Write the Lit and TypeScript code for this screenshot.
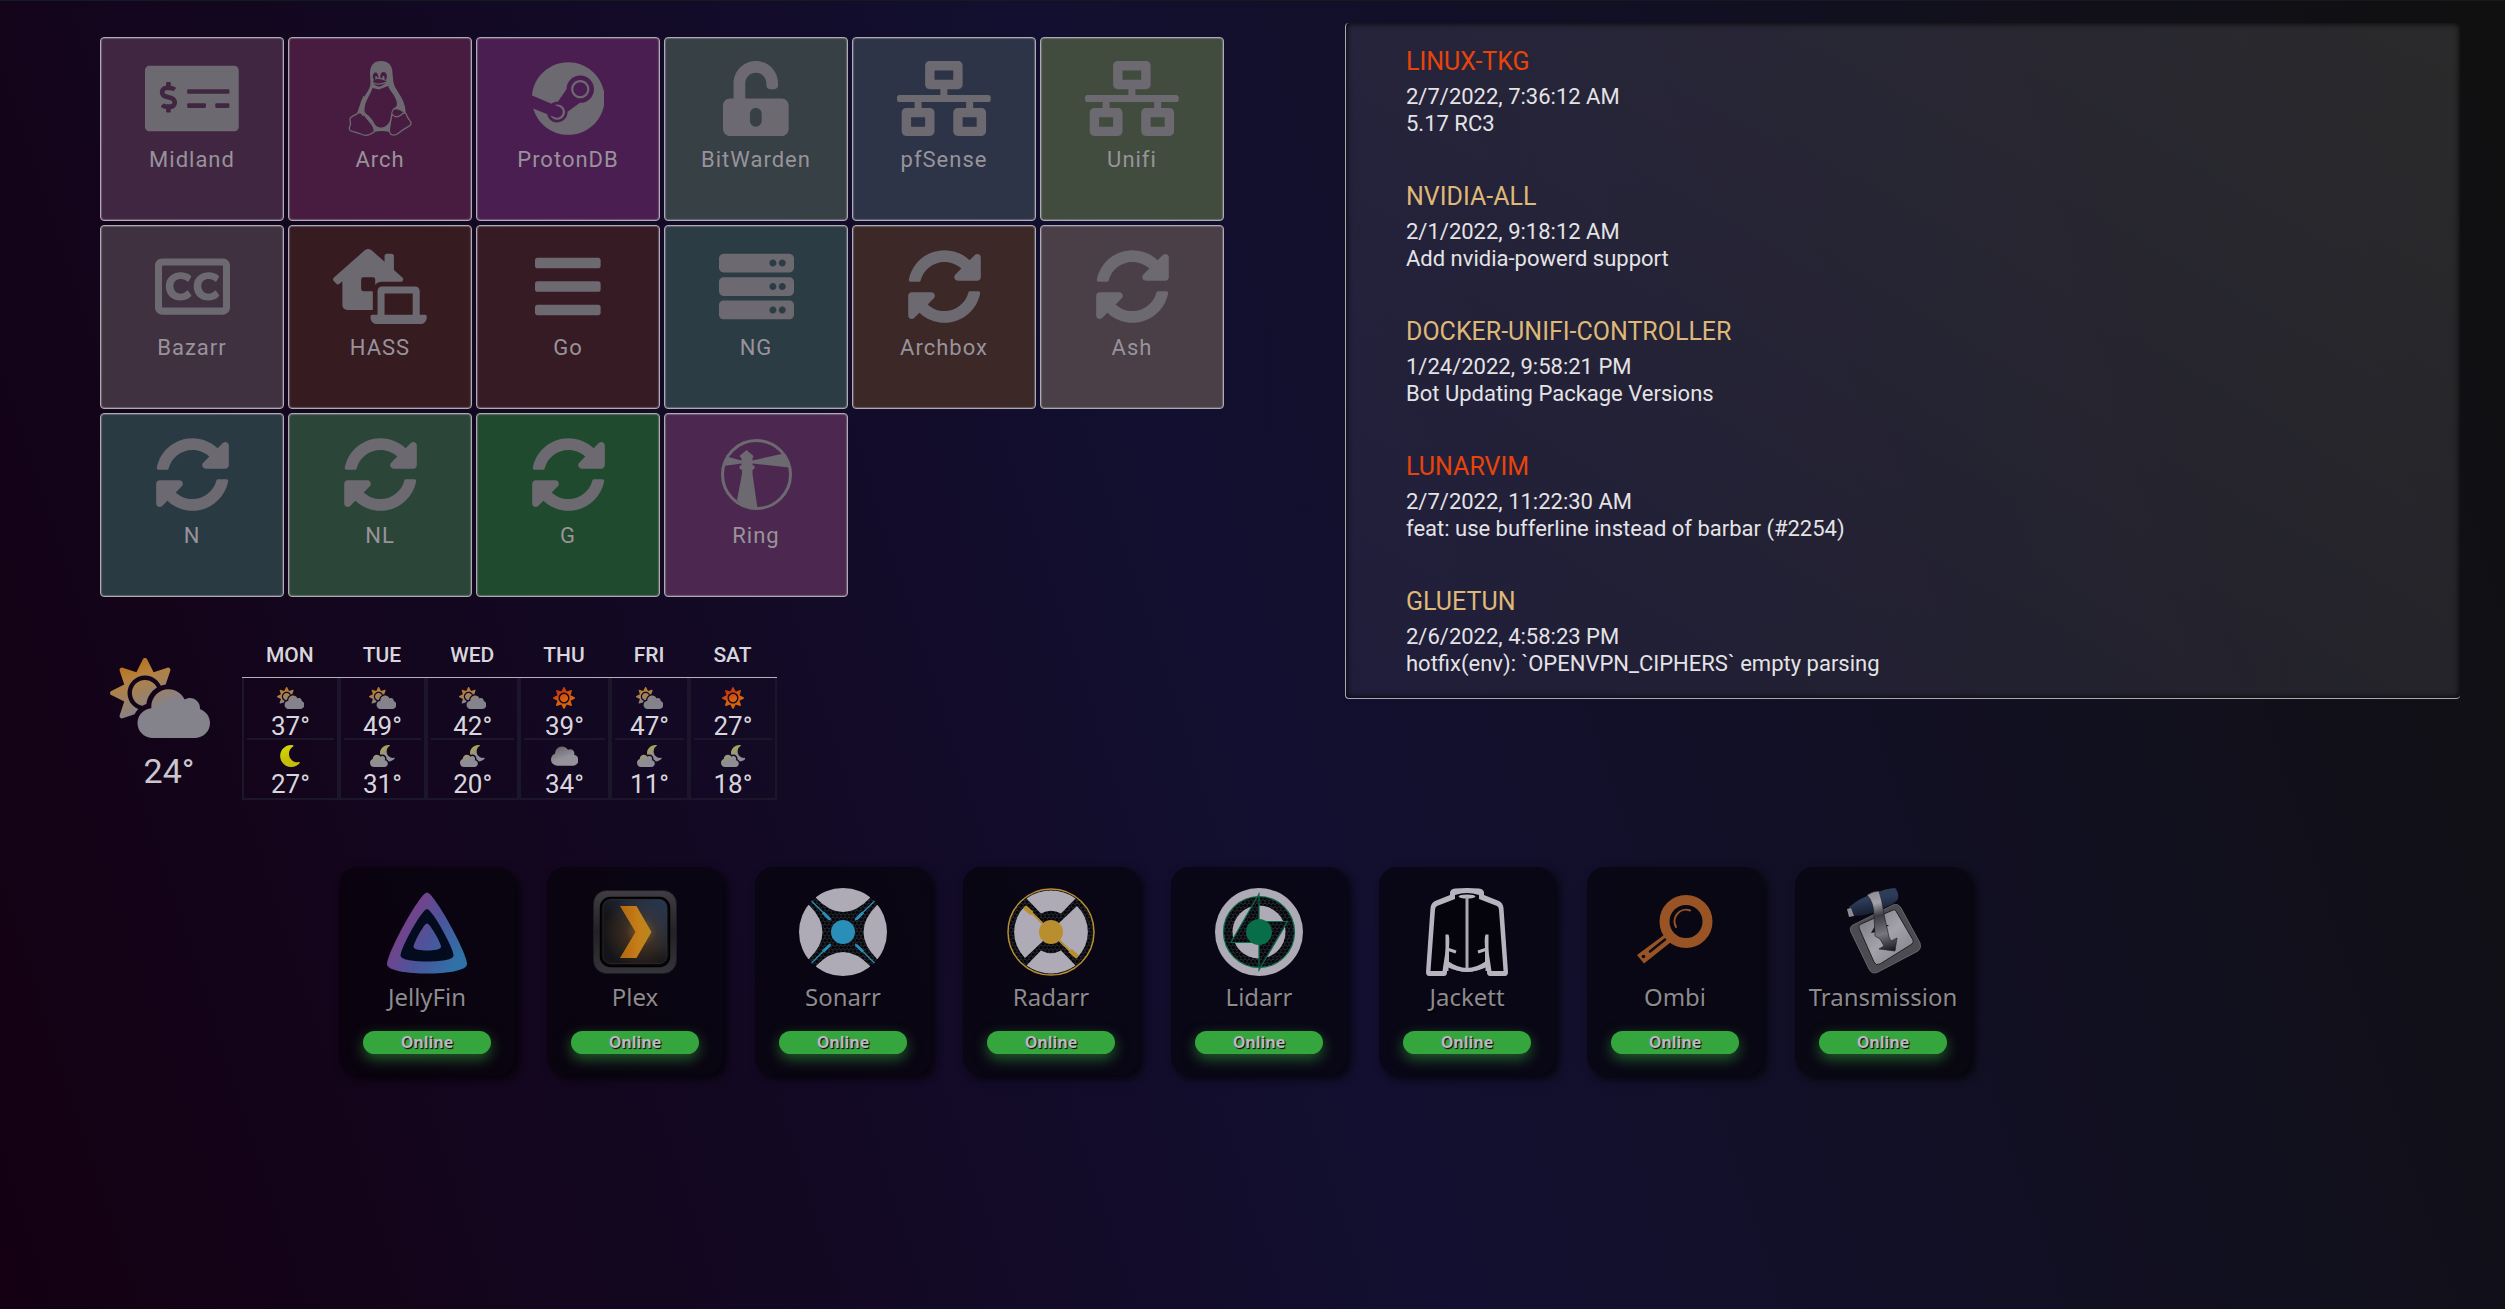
import { LitElement, html, css, svg, SVGTemplateResult } from "lit";
import { customElement, property } from "lit/decorators.js";
import { classMap } from "lit/directives/class-map.js";

type Glyph = { box: string; art: SVGTemplateResult };

const glyph = (w: number, d: string, h = 512): Glyph => ({
  box: `0 0 ${w} ${h}`,
  art: svg`<path d=${d}></path>`,
});

const glyphs: Record<string, Glyph> = {
  check: glyph(640, "M608 32H32C14.33 32 0 46.33 0 64v384c0 17.67 14.33 32 32 32h576c17.67 0 32-14.33 32-32V64c0-17.67-14.33-32-32-32zM176 327.88V344c0 4.42-3.58 8-8 8h-16c-4.42 0-8-3.58-8-8v-16.29c-11.29-.58-22.27-4.52-31.37-11.35-3.9-2.93-4.1-8.77-.57-12.14l11.75-11.21c2.77-2.64 6.89-2.76 10.13-.73 3.87 2.42 8.26 3.72 12.82 3.72h28.11c6.5 0 11.8-5.92 11.8-13.19 0-5.95-3.61-11.19-8.77-12.73l-45-13.5c-18.59-5.58-31.58-23.42-31.58-43.39 0-24.52 19.05-44.44 42.67-45.07V152c0-4.42 3.58-8 8-8h16c4.42 0 8 3.58 8 8v16.29c11.29.58 22.27 4.51 31.37 11.35 3.9 2.93 4.1 8.77.57 12.14l-11.75 11.21c-2.77 2.64-6.89 2.76-10.13.73-3.87-2.43-8.26-3.72-12.82-3.72h-28.11c-6.5 0-11.8 5.92-11.8 13.19 0 5.95 3.61 11.19 8.77 12.73l45 13.5c18.59 5.58 31.58 23.42 31.58 43.39 0 24.53-19.05 44.44-42.67 45.07zM416 312c0 4.42-3.58 8-8 8H296c-4.42 0-8-3.58-8-8v-16c0-4.42 3.58-8 8-8h112c4.42 0 8 3.58 8 8v16zm160 0c0 4.42-3.58 8-8 8h-80c-4.42 0-8-3.58-8-8v-16c0-4.42 3.58-8 8-8h80c4.42 0 8 3.58 8 8v16zm0-96c0 4.42-3.58 8-8 8H296c-4.42 0-8-3.58-8-8v-16c0-4.42 3.58-8 8-8h272c4.42 0 8 3.58 8 8v16z"),
  penguin: {
    box: "0 0 66 75",
    art: svg`
      <path fill-rule="evenodd" d="M34 0C27 0 23 4.500 23 12L23.500 22C23.500 30 15.500 35 12.500 45L10 52.500C14 51 16 52 18.500 56C21 60 24 60 26 65C28 70 31 68 34.500 68C38 68 42 70 43.500 64C45 58 44 54 46.500 49C50 46.500 55 50 58.500 53C59.500 42 52 33 48 26C46 22 46 17 45.500 12C45.500 4 41 0 34 0Z
      M28.500 11.500C26.500 11.500 25.500 14 26 17C26.300 18.500 27 19 27.500 19L28.500 18C27.500 15 29.500 13.500 30.500 17L31.500 17C31.500 13.500 30 11.500 28.500 11.500Z
      M36.500 11C34 11 33 14 33.500 17L35 17.500C35.500 13.500 38 14 37.500 18.500L39 19C41 15 39.500 11 36.500 11Z
      M26 20C29 17 33 17.500 39.500 20C39 23 33.500 26 31.500 25.500C29 25 26 23 26 20Z
      M25.500 27C24 33 17.500 40 17.500 49C17.500 54 20 51 26 60C28 64 29.500 66.500 34.500 66.500C39 66.500 42.500 62 43.500 58C44.500 52 44 48.500 48 46.500C51.500 45 50 39 46 33C44 30 42 28 41 25L32 28.500Z"></path>
      <path fill="none" stroke="currentColor" stroke-width="1.200" d="M26.500 21.500C30 24.500 34 23.500 39.500 21M17 35C13 42 12 48 16 55M46 30C50 36 54 42 51 48"></path>
      <path fill="none" stroke="currentColor" stroke-width="1.300" stroke-linejoin="round" d="M11 52C8 55 3 55 3 58C3 62 4.500 63 2.500 66C1 71 7 70 14 73C19 76 23 74 27 71C29 66 23 62 19 56C16 52 14 51 11 52ZM45 53C44 60 42 65 42.500 70C43 75.500 49 75 53 71C57 67 63 66 64 63C64.500 60 61.500 59 60 55C59 51 57 51 54 54C50 57 47 56 45 53Z"></path>
      <path d="M26.500 67C31 68 38 68 43 67L43 71C37 69.500 32 69.500 27 71Z"></path>`,
  },
  steam: glyph(496, "M496 256c0 137-111.2 248-248.4 248-113.8 0-209.6-76.3-239-180.4l95.2 39.3c6.4 32.1 34.9 56.4 68.9 56.4 39.2 0 71.9-32.4 70.2-73.5l84.5-60.2c52.1 1.3 95.8-40.9 95.8-93.5 0-51.6-42-93.5-93.7-93.5s-93.7 42-93.7 93.5v1.2L176.6 279c-15.5-.9-30.7 3.4-43.5 12.1L0 236.1C10.2 108.4 117.1 8 247.6 8 384.8 8 496 119 496 256zM155.7 384.3l-30.5-12.6a52.79 52.79 0 0 0 27.2 25.8c26.9 11.2 57.8-1.6 69-28.4 5.4-13 5.5-27.3.1-40.3-5.4-13-15.5-23.2-28.5-28.6-12.9-5.4-26.7-5.2-38.9-.6l31.5 13c19.8 8.2 29.2 30.9 20.9 50.7-8.3 19.9-31 29.2-50.8 21zm173.8-129.9c-34.4 0-62.4-28-62.4-62.3s28-62.3 62.4-62.3 62.4 28 62.4 62.3-27.9 62.3-62.4 62.3zm.1-15.6c25.9 0 46.9-21 46.9-46.8 0-25.9-21-46.8-46.9-46.8s-46.9 21-46.9 46.8c.1 25.8 21.1 46.8 46.9 46.8z"),
  unlock: glyph(448, "M400 256H152V152.9c0-39.6 31.7-72.5 71.3-72.9 40-.4 72.7 32.1 72.7 72v16c0 13.3 10.7 24 24 24h32c13.3 0 24-10.7 24-24v-16C376 68 307.5-.3 223.5 0 139.5.3 72 69.5 72 153.5V256H48c-26.5 0-48 21.5-48 48v160c0 26.5 21.5 48 48 48h352c26.5 0 48-21.5 48-48V304c0-26.5-21.5-48-48-48zM264 408c0 22.1-17.9 40-40 40s-40-17.900-40-40v-48c0-22.1 17.9-40 40-40s40 17.900 40 40v48z"),
  network: glyph(640, "M640 264v-16c0-8.84-7.16-16-16-16H344v-40h72c17.67 0 32-14.33 32-32V32c0-17.67-14.33-32-32-32H224c-17.67 0-32 14.33-32 32v128c0 17.67 14.33 32 32 32h72v40H16c-8.84 0-16 7.16-16 16v16c0 8.84 7.16 16 16 16h104v40H64c-17.67 0-32 14.33-32 32v128c0 17.67 14.33 32 32 32h160c17.67 0 32-14.33 32-32V352c0-17.67-14.33-32-32-32h-56v-40h304v40h-56c-17.67 0-32 14.33-32 32v128c0 17.67 14.33 32 32 32h160c17.67 0 32-14.33 32-32V352c0-17.67-14.33-32-32-32h-56v-40h104c8.84 0 16-7.16 16-16zM256 128V64h128v64H256zm-64 320H96v-64h96v64zm352 0h-96v-64h96v64z"),
  captions: glyph(512, "M464 64H48C21.5 64 0 85.5 0 112v288c0 26.5 21.5 48 48 48h416c26.5 0 48-21.5 48-48V112c0-26.5-21.5-48-48-48zm-6 336H54c-3.3 0-6-2.7-6-6V118c0-3.3 2.7-6 6-6h404c3.3 0 6 2.7 6 6v276c0 3.3-2.7 6-6 6zm-211.1-85.7c1.7 2.4 1.5 5.6-.5 7.7-53.6 56.8-172.8 32.1-172.8-67.9 0-97.3 121.7-119.5 172.5-70.1 2.1 2 2.5 3.2 1 5.7l-17.5 30.5c-1.9 3.1-6.2 4-9.1 1.7-40.8-32-94.6-14.9-94.6 31.2 0 48 51 70.5 92.2 32.6 2.8-2.5 7.1-2.1 9.2.9l19.6 27.7zm190.4 0c1.7 2.4 1.5 5.6-.5 7.7-53.6 56.9-172.8 32.1-172.8-67.900 0-97.3 121.7-119.5 172.5-70.1 2.1 2 2.5 3.2 1 5.700L420 220.2c-1.900 3.1-6.200 4-9.100 1.700-40.800-32-94.600-14.900-94.600 31.200 0 48 51 70.500 92.200 32.600 2.800-2.500 7.100-2.100 9.200.9l19.600 27.700z"),
  house: glyph(640, "M272,288H208a16,16,0,0,1-16-16V208a16,16,0,0,1,16-16h64a16,16,0,0,1,16,16v37.12C299.11,232.24,315,224,332.8,224H469.74l6.65-7.53A16.51,16.51,0,0,0,480,207a16.31,16.31,0,0,0-4.75-10.61L416,144V48a16,16,0,0,0-16-16H368a16,16,0,0,0-16,16V87.3L263.5,8.92C258,4,247.45,0,240.05,0s-17.93,4-23.47,8.92L4.78,196.42A16.15,16.15,0,0,0,0,207a16.4,16.4,0,0,0,3.55,9.39L22.34,237.7A16.22,16.22,0,0,0,33,242.48,16.51,16.51,0,0,0,42.34,239L64,219.88V384a32,32,0,0,0,32,32H272ZM629.33,448H592V288c0-17.67-12.89-32-28.8-32H332.8c-15.91,0-28.8,14.33-28.8,32V448H266.67A10.67,10.67,0,0,0,256,458.67v10.66A42.82,42.82,0,0,0,298.6,512H597.4A42.82,42.82,0,0,0,640,469.33V458.67A10.67,10.67,0,0,0,629.33,448ZM544,448H352V304H544Z"),
  bars: glyph(448, "M16 132h416c8.837 0 16-7.163 16-16V76c0-8.837-7.163-16-16-16H16C7.163 60 0 67.163 0 76v40c0 8.837 7.163 16 16 16zm0 160h416c8.837 0 16-7.163 16-16v-40c0-8.837-7.163-16-16-16H16c-8.837 0-16 7.163-16 16v40c0 8.837 7.163 16 16 16zm0 160h416c8.837 0 16-7.163 16-16v-40c0-8.837-7.163-16-16-16H16c-8.837 0-16 7.163-16 16v40c0 8.837 7.163 16 16 16z"),
  server: glyph(512, [0, 160, 320].map((y) => `M480 ${160 + y}H32c-17.673 0-32-14.327-32-32v-64c0-17.673 14.327-32 32-32h448c17.673 0 32 14.327 32 32v64c0 17.673-14.327 32-32 32zm-48-88c-13.255 0-24 10.745-24 24s10.745 24 24 24 24-10.745 24-24-10.745-24-24-24zm-64 0c-13.255 0-24 10.745-24 24s10.745 24 24 24 24-10.745 24-24-10.745-24-24-24z`).join("")),
  sync: glyph(512, "M370.72 133.28C339.458 104.008 298.888 87.962 255.848 88c-77.458.068-144.328 53.178-162.791 126.85-1.344 5.363-6.122 9.15-11.651 9.15H24.103c-7.498 0-13.194-6.807-11.807-14.176C33.933 94.924 134.813 8 256 8c66.448 0 126.791 26.136 171.315 68.685L463.03 40.97C478.149 25.851 504 36.559 504 57.941V192c0 13.255-10.745 24-24 24H345.941c-21.382 0-32.09-25.851-16.971-40.971l41.75-41.749zM32 296h134.059c21.382 0 32.09 25.851 16.971 40.971l-41.75 41.75c31.262 29.273 71.835 45.319 114.876 45.28 77.418-.07 144.315-53.144 162.787-126.849 1.344-5.363 6.122-9.15 11.651-9.15h57.304c7.498 0 13.194 6.807 11.807 14.176C478.067 417.076 377.187 504 256 504c-66.448 0-126.791-26.136-171.315-68.685L48.97 471.03C33.851 486.149 8 475.441 8 454.059V320c0-13.255 10.745-24 24-24z"),
  lighthouse: {
    box: "-2 -2 75 75",
    art: svg`
      <circle cx="35.500" cy="35.500" r="34" fill="none" stroke="currentColor" stroke-width="3"></circle>
      <path d="M25.500 11L32.500 17L31.500 19.500V21.500L62.500 14.500C65 18.500 67 23 68 28.500L31.500 24.500V26L33.500 27V29.500L31.500 31V35L36.700 71C28 70 21 67 16 61L21 35V31L18.500 29.500V27L20.500 26V24.500L3 27L5.500 17.500L20.500 21.500V19.500L18.500 17Z"></path>`,
  },
  cloudSun: glyph(640, "M575.2 325.7c.2-1.9.8-3.7.8-5.6 0-35.3-28.7-64-64-64-12.6 0-24.2 3.8-34.1 10-17.6-38.8-56.5-66-101.9-66-61.8 0-112 50.1-112 112 0 3 .7 5.8.9 8.7-49.6 3.7-88.9 44.7-88.9 95.3 0 53 43 96 96 96h272c53 0 96-43 96-96 0-42.1-27.2-77.4-64.8-90.4zm-430.4-22.6c-43.7-43.7-43.7-114.7 0-158.3 43.7-43.7 114.7-43.7 158.4 0 9.7 9.7 16.9 20.9 22.3 32.7 9.8-3.7 20.1-6 30.7-7.5L386 81.1c4-11.9-7.3-23.1-19.2-19.2L279 91.2 237.5 8.4C232-2.8 216-2.8 210.4 8.4L169 91.2 81.1 61.9C69.3 58 58 69.3 61.9 81.1l29.3 87.8-82.8 41.5c-11.2 5.6-11.2 21.5 0 27.1l82.8 41.4-29.3 87.8c-4 11.9 7.3 23.1 19.2 19.2l76.1-25.3c6.1-12.4 14-23.7 23.6-33.5-13.1-5.4-25.4-13.4-36-24zm-4.8-79.2c0 40.8 29.3 74.8 67.9 82.3 8-4.7 16.3-8.8 25.2-11.7 5.4-44.3 31-82.5 67.4-105C287.3 160.4 258 140 224 140c-46.3 0-84 37.6-84 83.9z"),
  cloudMoon: glyph(576, "M342.8 352.7c5.7-9.6 9.2-20.7 9.2-32.7 0-35.3-28.7-64-64-64-17.2 0-32.8 6.9-44.3 17.9-16.3-29.6-47.5-49.9-83.7-49.9-53 0-96 43-96 96 0 2 .5 3.8.6 5.7C27.1 338.8 0 374.1 0 416c0 53 43 96 96 96h240c44.2 0 80-35.8 80-80 0-41.9-32.3-75.8-73.2-79.3zm222.5-54.3c-93.1 17.7-178.5-53.7-178.5-147.7 0-54.2 29-104 76.1-130.8 7.3-4.1 5.4-15.1-2.8-16.7C448.400 1.100 436.700 0 425 0 319.100 0 233.100 85.900 233.100 191.900c0 8.500.7 16.800 1.800 25 5.900 4.300 11.600 8.900 16.700 14.200 11.400-4.700 23.700-7.200 36.400-7.200 52.900 0 96 43.100 96 96 0 3.600-.2 7.200-.6 10.700 23.600 10.800 42.400 29.500 53.500 52.600 54.400-3.400 103.700-29.300 137.100-70.400 5.300-6.500-.5-16.100-8.700-14.400z"),
  cloud: glyph(640, "M537.6 226.6c4.1-10.7 6.4-22.4 6.4-34.6 0-53-43-96-96-96-19.7 0-38.1 6-53.3 16.2C367 64.2 315.3 32 256 32c-88.4 0-160 71.6-160 160 0 2.7.1 5.4.2 8.1C40.2 219.8 0 273.2 0 336c0 79.5 64.5 144 144 144h368c70.7 0 128-57.3 128-128 0-61.9-44-113.6-102.4-125.4z"),
  moon: glyph(512, "M283.211 512c78.962 0 151.079-35.925 198.857-94.792 7.068-8.708-.639-21.43-11.562-19.35-124.203 23.654-238.262-71.576-238.262-196.954 0-72.222 38.662-138.635 101.498-174.394 9.686-5.512 7.25-20.197-3.756-22.23A258.156 258.156 0 0 0 283.211 0c-141.309 0-256 114.511-256 256 0 141.309 114.511 256 256 256z"),
  sun: glyph(512, "M256 160c-52.9 0-96 43.1-96 96s43.1 96 96 96 96-43.1 96-96-43.1-96-96-96zm246.4 80.5l-94.7-47.3 33.5-100.4c4.5-13.6-8.4-26.5-21.9-21.9l-100.4 33.5-47.4-94.8c-6.4-12.8-24.6-12.8-31 0l-47.3 94.7L92.7 70.8c-13.6-4.5-26.5 8.4-21.9 21.9l33.5 100.4-94.7 47.4c-12.8 6.4-12.8 24.6 0 31l94.7 47.3-33.5 100.5c-4.5 13.6 8.4 26.5 21.9 21.9l100.4-33.5 47.3 94.7c6.4 12.8 24.6 12.8 31 0l47.3-94.7 100.4 33.5c13.6 4.5 26.5-8.4 21.9-21.9l-33.5-100.4 94.7-47.3c13-6.5 13-24.7.2-31.1zm-155.9 106c-49.9 49.9-131.1 49.9-181 0-49.9-49.9-49.9-131.1 0-181 49.9-49.9 131.1-49.9 181 0 49.9 49.9 49.9 131.1 0 181z"),
};

const gradients: Record<string, [string, string, string]> = {
  cloudSun: ["#b8690c", "#b5813c", "#84828a"],
  cloudMoon: ["#a8a41c", "#a6a658", "#8e8d94"],
  cloud: ["#5c5a60", "#77757b", "#94929a"],
  moon: ["#d8dc08", "#d0d00a", "#c4be08"],
  sun: ["#b81f0c", "#c83a0a", "#d8620c"],
};

const mesh = (id: string) => svg`
  <pattern id=${id} width="4" height="7" patternUnits="userSpaceOnUse">
    <rect width="4" height="7" fill="#06070d"></rect>
    <path d="M2 0V1.200L0 2.400V4.600L2 5.800V7M2 1.200L4 2.400M4 4.600L2 5.800" fill="none" stroke="#302f38" stroke-width=".7"></path>
  </pattern>`;

const logos: Record<string, SVGTemplateResult> = {
  JellyFin: svg`
    <defs><linearGradient id="jelly" gradientUnits="userSpaceOnUse" x1="16" y1="36" x2="76" y2="72">
      <stop offset="0" stop-color="#7a3f88"></stop><stop offset=".5" stop-color="#4b559c"></stop><stop offset="1" stop-color="#2f72a8"></stop>
    </linearGradient></defs>
    <path fill="url(#jelly)" d="M44 4.500C51 4.500 84 65 84 76C84 83 62 85.500 44 85.500S4 83 4 76C4 65 37 4.500 44 4.500Z"></path>
    <path fill="#030b1e" d="M44 21C49 21 70.500 60 70.500 67.500C70.500 72 56 73.500 44 73.500S17.500 72 17.500 67.500C17.500 60 39 21 44 21Z"></path>
    <path fill="url(#jelly)" d="M44 35.500C47 35.500 58 55 58 59C58 61.500 50 62.500 44 62.500S30.500 61.500 30.500 59C30.500 55 41 35.500 44 35.500Z"></path>`,
  Plex: svg`
    <defs>
      <linearGradient id="plexRim" x1="0" y1="0" x2="0" y2="1"><stop offset="0" stop-color="#403e44"></stop><stop offset=".5" stop-color="#222126"></stop><stop offset="1" stop-color="#35343a"></stop></linearGradient>
      <radialGradient id="plexGlow" cx=".6" cy=".5" r=".6"><stop offset="0" stop-color="#8a5c1c"></stop><stop offset=".4" stop-color="#3c2d20"></stop><stop offset="1" stop-color="#14151a"></stop></radialGradient>
      <linearGradient id="plexSky" x1="1" y1="0" x2=".5" y2=".6"><stop offset="0" stop-color="#2c4266" stop-opacity=".8"></stop><stop offset="1" stop-color="#2c4266" stop-opacity="0"></stop></linearGradient>
      <linearGradient id="plexMark" x1="0" y1="0" x2="1" y2="0"><stop offset="0" stop-color="#b4670f"></stop><stop offset=".6" stop-color="#c57f1a"></stop><stop offset="1" stop-color="#b5891d"></stop></linearGradient>
    </defs>
    <rect x="2.500" y="2.500" width="83" height="83" rx="13" fill="url(#plexRim)" stroke="#1c1b20"></rect>
    <rect x="9.500" y="9.500" width="69" height="69" rx="10" fill="#09080c" stroke="#000" stroke-width="1.500"></rect>
    <rect x="12" y="11.500" width="64" height="64" rx="8" fill="url(#plexGlow)" stroke="#2e2320"></rect>
    <rect x="12" y="11.500" width="64" height="64" rx="8" fill="url(#plexSky)"></rect>
    <path fill="url(#plexMark)" d="M29 18H45.500L60.500 44L45.500 70H29L44.500 44Z"></path>`,
  Sonarr: svg`
    <defs>${mesh("meshS")}<clipPath id="discS"><circle cx="44" cy="44" r="44"></circle></clipPath></defs>
    <g clip-path="url(#discS)">
      <path fill="url(#meshS)" d="M10 10H78V78H10Z"></path>
      <path fill="#aeabb6" d="M17 10Q44 38 71 10L71 -2H17ZM17 78Q44 50 71 78L71 90H17ZM10 17Q37 44 10 71L-4 71V17ZM78 17Q51 44 78 71L92 71V17Z"></path>
    </g>
    <path stroke="#2a8fb8" stroke-width="1.200" d="M12.500 13L75.500 75M75.500 13L12.500 75"></path>
    <circle cx="44" cy="44" r="17" fill="url(#meshS)"></circle>
    <path stroke="#2a8fb8" stroke-width="3" d="M24 24.500L31 31.500M64 24.500L57 31.500M24 63.500L31 57M64 63.500L57 57"></path>
    <circle cx="44" cy="44" r="12" fill="#2a8fb8"></circle>`,
  Radarr: svg`
    <defs>${mesh("meshR")}</defs>
    <circle cx="44" cy="44" r="43" fill="url(#meshR)" stroke="#b88e2e" stroke-width="1.500"></circle>
    <path fill="#aeabb6" d="M19.500 10.500A42 42 0 0 1 68.500 10.500L54 25.500A21 21 0 0 0 34 25.500ZM19.500 77.500A42 42 0 0 0 68.500 77.500L54 62.500A21 21 0 0 1 34 62.500ZM18 18A36.500 36.500 0 0 0 18 70L36 53V35ZM70 18A36.500 36.500 0 0 1 70 70L52 53V35Z"></path>
    <path stroke="#b88e2e" stroke-width="2" d="M20 20L68 68"></path>
    <path stroke="#b88e2e" stroke-width="4.500" d="M17.500 19L25 25.500M63 62.500L70.500 69"></path>
    <circle cx="44" cy="44" r="12" fill="#b88e2e"></circle>`,
  Lidarr: svg`
    <defs>${mesh("meshL")}</defs>
    <circle cx="44" cy="44" r="44" fill="#aeabb6"></circle>
    <circle cx="44" cy="44" r="35.500" fill="url(#meshL)" stroke="#0a6b48" stroke-width="1.200"></circle>
    <circle cx="44" cy="44" r="26.500" fill="#aeabb6"></circle>
    <path fill="url(#meshL)" stroke="#0a6b48" stroke-width="1.200" d="M44 6V54.500H16ZM44 82V33.500H72.500Z"></path>
    <circle cx="44" cy="44" r="13" fill="#076e49"></circle>`,
  Jackett: svg`
    <path fill="#b7b4bf" d="M27 5Q27 1 32 0.500Q44 -0.500 56 0.500Q61 1 61 5V7L76 13Q80 15 80.500 20L85 84Q85 88 82 88H67Q64 88 64 84V79Q44 88 24 79V84Q24 88 21 88H6Q3 88 3 84L7.500 20Q8 15 12 13L27 7Z"></path>
    <path fill="#05040c" d="M32 7Q44 3 56 7V11L74 18Q76 19 76 22L80.500 83H68.500L63 47Q61 47 62 60V74Q44 88 26 74V60Q27 47 25 47L19.500 83H7.500L12 22Q12 19 14 18L32 11Z"></path>
    <ellipse cx="44" cy="8.500" rx="8.500" ry="2" fill="#b7b4bf"></ellipse>
    <path stroke="#aaa7b2" stroke-width="3" d="M44 9V81"></path>
    <path fill="none" stroke="#b7b4bf" stroke-width="3" d="M24 46.500V60Q24 68 24 83M64 46.500V60Q64 68 64 83M24 61L33 64M64 61L55 64"></path>
    <path fill="none" stroke="#b7b4bf" stroke-width="4" d="M24 75Q34 82 44 82T64 75"></path>`,
  Ombi: svg`
    <path fill="#985424" d="M33 47L6 67L13 75.500L40 54Z"></path>
    <circle cx="55" cy="33.500" r="21.500" fill="none" stroke="#985424" stroke-width="10"></circle>
    <path fill="none" stroke="#985424" stroke-width="2" stroke-linecap="round" d="M45 39A11.500 11.500 0 0 1 59 22.500"></path>
    <path stroke="#0b0a14" stroke-width="2.500" stroke-linecap="round" d="M34 51.500L19 63.500"></path>
    <circle cx="12.500" cy="68.500" r="1.800" fill="#0b0a14"></circle>`,
  Transmission: svg`
    <defs>
      <linearGradient id="plate" x1="0" y1="0" x2="1" y2="1"><stop offset="0" stop-color="#74737b"></stop><stop offset=".5" stop-color="#a3a2aa"></stop><stop offset="1" stop-color="#7c7b83"></stop></linearGradient>
      <linearGradient id="strap" gradientUnits="userSpaceOnUse" x1="34" y1="3" x2="50" y2="64"><stop offset="0" stop-color="#8d8c94"></stop><stop offset=".2" stop-color="#a3a2aa"></stop><stop offset=".4" stop-color="#3c3b41"></stop><stop offset=".7" stop-color="#77767d"></stop><stop offset="1" stop-color="#17161b"></stop></linearGradient>
      <linearGradient id="grip" x1="0" y1="0" x2=".3" y2="1"><stop offset="0" stop-color="#30425f"></stop><stop offset=".5" stop-color="#2b3b58"></stop><stop offset="1" stop-color="#151d30"></stop></linearGradient>
    </defs>
    <path fill="#4c4b51" stroke="#66656c" stroke-width="1" stroke-linejoin="round" d="M14 37L54 17Q59 15 62 20L81 55Q83 60 79 63L39 84Q33 87 30 81L12 44Q10 39 14 37Z"></path>
    <path fill="url(#plate)" stroke="#201f25" d="M22 36L54 22Q56 21 57 23L74 52Q75 54 73 56L41 76Q37 78 35 74L20 40Q19 37 22 36Z"></path>
    <path fill="#141318" d="M32 45L37 36V44ZM45 37L50 37L46 40Z"></path>
    <path fill="url(#grip)" d="M10 19Q22 9 34 6Q48 0 56 0Q60 4 59 11Q56 16 44 20Q30 28 14 28Z"></path>
    <path fill="#8d8c94" d="M8 21L12 20L15 28L10 29Z"></path>
    <path fill="url(#strap)" stroke="#1b1a20" stroke-width=".6" d="M28 7Q34 3 40 3Q43 12 45 26L50 49L52 53L58 50L56 63L40 61L45 58L41 51L36 48L35 28Q35 14 28 7Z"></path>`,
};

@customElement("app-glyph")
class AppGlyph extends LitElement {
  @property() name = "sync";
  @property({ type: Boolean }) shaded = false;

  static styles = css`
    :host { display: block; }
    .art { display: block; height: 100%; width: auto; margin: 0 auto; fill: currentColor; }
    .shaded { fill: url(#tint); }
  `;

  render() {
    const g = glyphs[this.name];
    const stops = gradients[this.name];
    return html`<svg class=${classMap({ art: true, shaded: this.shaded })} viewBox=${g.box} aria-hidden="true">
      ${this.shaded && stops
        ? svg`<defs><linearGradient id="tint" x1=".1" y1="0" x2=".6" y2="1">
            <stop offset="0" stop-color=${stops[0]}></stop>
            <stop offset=".25" stop-color=${stops[1]}></stop>
            <stop offset=".65" stop-color=${stops[2]}></stop>
          </linearGradient></defs>`
        : null}
      ${g.art}
    </svg>`;
  }
}

@customElement("app-bookmarks")
class AppBookmarks extends LitElement {
  private tiles: [string, string, string][] = [
    ["Midland", "check", "#402640"],
    ["Arch", "penguin", "#481c40"],
    ["ProtonDB", "steam", "#4a1e50"],
    ["BitWarden", "unlock", "#364045"],
    ["pfSense", "network", "#2d3447"],
    ["Unifi", "network", "#414c3f"],
    ["Bazarr", "captions", "#3f3140"],
    ["HASS", "house", "#361b21"],
    ["Go", "bars", "#371b24"],
    ["NG", "server", "#2c3c45"],
    ["Archbox", "sync", "#3c2827"],
    ["Ash", "sync", "#4a3e47"],
    ["N", "sync", "#293a42"],
    ["NL", "sync", "#2b4638"],
    ["G", "sync", "#204a2d"],
    ["Ring", "lighthouse", "#4c2850"],
  ];

  static styles = css`
    :host { display: block; }
    .grid { display: grid; grid-template-columns: repeat(6, 184px); gap: 4px; }
    .tile {
      box-sizing: border-box;
      height: 184px;
      padding-top: 23px;
      border: 1px solid #aeaab2;
      border-radius: 4px;
      box-shadow: inset 0 0 1px 1px rgba(170, 166, 174, 0.4);
      color: #98939b;
      font-size: 22px;
      line-height: 26px;
      letter-spacing: 1px;
      text-align: center;
      text-decoration: none;
    }
    .icon { height: 75px; margin-bottom: 11px; color: #6c6970; }
  `;

  render() {
    return html`<nav class="grid" aria-label="Bookmarks">
      ${this.tiles.map(
        ([label, icon, color]) => html`<a class="tile" href="#${label}" style="background-color:${color}">
          <app-glyph class="icon" name=${icon}></app-glyph>${label}
        </a>`
      )}
    </nav>`;
  }
}

@customElement("app-weather")
class AppWeather extends LitElement {
  private days = ["MON", "TUE", "WED", "THU", "FRI", "SAT"];
  private high: [string, number][] = [
    ["cloudSun", 37], ["cloudSun", 49], ["cloudSun", 42], ["sun", 39], ["cloudSun", 47], ["sun", 27],
  ];
  private low: [string, number][] = [
    ["moon", 27], ["cloudMoon", 31], ["cloudMoon", 20], ["cloud", 34], ["cloudMoon", 11], ["cloudMoon", 18],
  ];

  static styles = css`
    :host { display: flex; gap: 32px; }
    .now { width: 100px; margin: 22px 0 0 10px; color: #c9c6cd; }
    .nowIcon { height: 80px; margin-bottom: 13px; }
    .reading { padding-left: 18px; text-align: center; font-size: 34px; line-height: 40px; }
    .days { align-self: start; border-collapse: separate; border-spacing: 0; color: #d8d6dc; }
    th { padding: 7px 25px 10px 24px; border-bottom: 1px solid #b5b1b9; font-size: 21px; line-height: 24px; font-weight: 500; }
    td { padding: 0 3px; border: solid #1b162a; border-width: 0 2px; text-align: center; font-size: 26px; line-height: 24px; }
    .high .slot { padding-top: 9px; border-bottom: 2px solid #1b162a; }
    .low .slot { padding: 5px 0 2px; }
    .low td { border-bottom-width: 2px; }
    .icon { height: 22px; margin-bottom: 5px; }
  `;

  private cells(list: [string, number][]) {
    return list.map(
      ([icon, deg]) => html`<td><div class="slot"><app-glyph class="icon" name=${icon} shaded></app-glyph>${deg}°</div></td>`
    );
  }

  render() {
    return html`
      <div class="now">
        <app-glyph class="nowIcon" name="cloudSun" shaded></app-glyph>
        <div class="reading">24°</div>
      </div>
      <table class="days">
        <thead><tr>${this.days.map((d) => html`<th scope="col">${d}</th>`)}</tr></thead>
        <tbody>
          <tr class="high">${this.cells(this.high)}</tr>
          <tr class="low">${this.cells(this.low)}</tr>
        </tbody>
      </table>`;
  }
}

@customElement("app-feed")
class AppFeed extends LitElement {
  private items = [
    { repo: "LINUX-TKG", when: "2/7/2022, 7:36:12 AM", text: "5.17 RC3", fresh: true },
    { repo: "NVIDIA-ALL", when: "2/1/2022, 9:18:12 AM", text: "Add nvidia-powerd support", fresh: false },
    { repo: "DOCKER-UNIFI-CONTROLLER", when: "1/24/2022, 9:58:21 PM", text: "Bot Updating Package Versions", fresh: false },
    { repo: "LUNARVIM", when: "2/7/2022, 11:22:30 AM", text: "feat: use bufferline instead of barbar (#2254)", fresh: true },
    { repo: "GLUETUN", when: "2/6/2022, 4:58:23 PM", text: "hotfix(env): \`OPENVPN_CIPHERS\` empty parsing", fresh: false },
  ];

  static styles = css`
    :host {
      display: block;
      border: solid #aaa8ae;
      border-width: 0 0 1px 1px;
      border-radius: 4px;
      background: linear-gradient(30deg, rgba(255, 255, 255, 0.06), rgba(255, 255, 255, 0.11));
      box-shadow: inset 0 0 6px #000;
      color: #e4e3e6;
      font-size: 22px;
      line-height: 27px;
    }
    .item { padding: 24px 60px 21px; }
    .repo { margin: 0 0 6px; color: #deb877; font-size: 25px; line-height: 30px; font-weight: 400; }
    .fresh { color: #e8440a; }
    p { margin: 0; }
  `;

  render() {
    return html`${this.items.map(
      (i) => html`<article class="item">
        <h2 class=${classMap({ repo: true, fresh: i.fresh })}>${i.repo}</h2>
        <p>${i.when}</p>
        <p>${i.text}</p>
      </article>`
    )}`;
  }
}

@customElement("app-services")
class AppServices extends LitElement {
  static styles = css`
    :host { display: flex; flex-wrap: wrap; justify-content: center; gap: 32px; padding-right: 250px; font-family: "Noto Sans", "Open Sans", sans-serif; }
    .card {
      box-sizing: border-box;
      width: 176px;
      height: 208px;
      padding-top: 21px;
      border-radius: 18px;
      background: rgba(5, 4, 8, 0.62);
      box-shadow: 4px 4px 8px rgba(0, 0, 0, 0.75);
      color: #8d8a90;
      text-align: center;
      text-decoration: none;
    }
    .logo { display: block; width: 88px; height: 88px; margin: 0 auto; }
    .name { margin: 4px 0 18px; font-size: 24px; line-height: 33px; font-weight: 400; text-shadow: 1px 1px 1px #000; }
    .state {
      width: 128px;
      margin: 0 auto;
      border-radius: 12px;
      background: #35a63d;
      box-shadow: 0 5px 14px rgba(53, 166, 61, 0.55);
      color: #bbb6c0;
      font-size: 16px;
      line-height: 23px;
      font-weight: 700;
      text-shadow: 1px 1px 1px #000;
    }
  `;

  render() {
    return html`${Object.keys(logos).map(
      (name) => html`<a class="card" href="#${name}">
        <svg class="logo" viewBox="0 0 88 88" aria-hidden="true">${logos[name]}</svg>
        <h2 class="name">${name}</h2>
        <div class="state">Online</div>
      </a>`
    )}`;
  }
}

@customElement("app-root")
class AppRoot extends LitElement {
  static styles = css`
    :host {
      display: block;
      box-sizing: border-box;
      min-height: 100vh;
      padding: 22px 45px 40px 100px;
      border-top: 1px solid #141b20;
      background: linear-gradient(72deg, #140012 0%, #120f30 50%, #101010 100%);
      font-family: Roboto, "Liberation Sans", sans-serif;
    }
    .top { display: grid; grid-template-columns: auto 1fr; gap: 121px; align-items: start; }
    .left { display: grid; gap: 39px; padding-top: 14px; }
    .services { margin-top: 67px; }
  `;

  render() {
    return html`
      <main>
        <div class="top">
          <div class="left">
            <app-bookmarks></app-bookmarks>
            <app-weather></app-weather>
          </div>
          <app-feed></app-feed>
        </div>
        <app-services class="services"></app-services>
      </main>`;
  }
}
